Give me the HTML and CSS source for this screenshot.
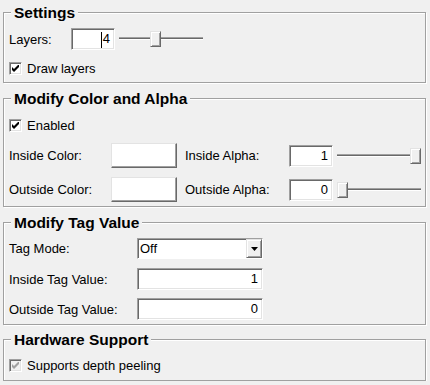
FILE: index.html
```
<!DOCTYPE html>
<html>
<head>
  <title>Depth Peeling Settings</title>
  <link rel="stylesheet" href="styles.css">
</head>
<body>

  <fieldset class="group settings">
    <legend>Settings</legend>
    <div class="row row-layers">
      <span class="lbl lbl-layers">Layers:</span>
      <div class="field field-small"><span class="caret"></span>4</div>
      <div class="slider"><span class="thumb" style="left: 31px"></span></div>
    </div>
    <label class="check check-first">
      <span class="box"><svg viewBox="0 0 7 7" width="7" height="7"><polygon points="0,2 2,4 7,-1 7,2 2,7 0,5"/></svg></span>
      Draw layers
    </label>
  </fieldset>

  <fieldset class="group color">
    <legend>Modify Color and Alpha</legend>
    <label class="check check-first">
      <span class="box"><svg viewBox="0 0 7 7" width="7" height="7"><polygon points="0,2 2,4 7,-1 7,2 2,7 0,5"/></svg></span>
      Enabled
    </label>
    <div class="row row-color">
      <span class="lbl lbl-color">Inside Color:</span>
      <div class="swatch"></div>
      <span class="lbl lbl-alpha">Inside Alpha:</span>
      <div class="field field-small">1</div>
      <div class="slider"><span class="thumb" style="left: 73px"></span></div>
    </div>
    <div class="row row-color">
      <span class="lbl lbl-color">Outside Color:</span>
      <div class="swatch"></div>
      <span class="lbl lbl-alpha">Outside Alpha:</span>
      <div class="field field-small">0</div>
      <div class="slider"><span class="thumb" style="left: 0px"></span></div>
    </div>
  </fieldset>

  <fieldset class="group tag">
    <legend>Modify Tag Value</legend>
    <div class="row row-combo">
      <span class="lbl lbl-tag">Tag Mode:</span>
      <div class="combo">
        <span class="combo-text">Off</span>
        <span class="combo-btn"><svg viewBox="0 0 7 4" width="7" height="4"><polygon points="0,0 7,0 3.5,4"/></svg></span>
      </div>
    </div>
    <div class="row row-tag">
      <span class="lbl lbl-tag">Inside Tag Value:</span>
      <div class="field field-wide">1</div>
    </div>
    <div class="row row-tag row-last">
      <span class="lbl lbl-tag">Outside Tag Value:</span>
      <div class="field field-wide">0</div>
    </div>
  </fieldset>

  <fieldset class="group hw">
    <legend>Hardware Support</legend>
    <label class="check check-hw">
      <span class="box disabled"><svg viewBox="0 0 7 7" width="7" height="7"><polygon points="0,2 2,4 7,-1 7,2 2,7 0,5"/></svg></span>
      Supports depth peeling
    </label>
  </fieldset>

</body>
</html>
```

FILE: styles.css
```
body {
  margin: 0;
  padding: 4px 4px 0 3px;
  background-color: #f0f0f0;
  font-family: "Liberation Sans", Arial, sans-serif;
  font-size: 13px;
  color: #000;
}

/* group boxes */
.group {
  margin: 0;
  padding: 0 5px;
  min-width: 0;
  border: 1px solid #a0a0a0;
  box-shadow: 1px 1px 0 #fff, inset 1px 1px 0 #fff;
}

.group + .group {
  margin-top: 7px;
}

.group.hw {
  margin-top: 6px;
}

.group legend {
  margin-left: 2px;
  padding: 0 3px;
  font-size: 15.5px;
  font-weight: bold;
  line-height: 17px;
  background-color: #f0f0f0;
}

.settings {
  padding-bottom: 5px;
}

.color {
  padding-bottom: 4px;
}

.tag {
  padding-bottom: 4px;
}

.hw {
  padding-bottom: 6px;
}

/* rows */
.row {
  display: flex;
  align-items: center;
}

.row-layers {
  margin-top: 7px;
  height: 22px;
}

.row-color {
  margin-top: 9px;
  height: 25px;
}

.row-combo {
  margin-top: 7px;
  height: 21px;
}

.row-tag {
  margin-top: 9px;
  height: 22px;
}

.row-last {
  margin-top: 8px;
}

.lbl {
  flex: none;
  white-space: nowrap;
}

.lbl-layers { width: 62px; }
.lbl-color { width: 102px; }
.lbl-alpha { width: 104px; margin-left: 8px; }
.lbl-tag { width: 128px; }

/* sunken edit fields */
.field {
  box-sizing: border-box;
  flex: none;
  height: 22px;
  padding-right: 4px;
  background-color: #fff;
  border: 1px solid;
  border-color: #a0a0a0 #fff #fff #a0a0a0;
  box-shadow: inset 1px 1px 0 #696969, inset -1px -1px 0 #e3e3e3;
  text-align: right;
  line-height: 20px;
}

.field-small { width: 44px; }
.field-wide { width: 126px; }

.caret {
  display: inline-block;
  width: 1px;
  height: 16px;
  margin-right: 1px;
  background-color: #000;
  vertical-align: middle;
}

/* trackbars */
.slider {
  position: relative;
  flex: none;
  width: 84px;
  height: 16px;
  margin-left: 4px;
}

.slider::before {
  content: "";
  position: absolute;
  left: 0;
  right: 0;
  top: 6px;
  height: 1px;
  border-top: 1px solid #a0a0a0;
  border-bottom: 1px solid #fff;
  background-color: #696969;
}

.thumb {
  position: absolute;
  top: 0;
  box-sizing: border-box;
  width: 11px;
  height: 16px;
  background-color: #f0f0f0;
  border: 1px solid;
  border-color: #e3e3e3 #696969 #696969 #e3e3e3;
  box-shadow: inset 1px 1px 0 #fff, inset -1px -1px 0 #a0a0a0;
}

/* colour buttons */
.swatch {
  box-sizing: border-box;
  flex: none;
  width: 66px;
  height: 25px;
  background-color: #fff;
  border: 1px solid;
  border-color: #e3e3e3 #696969 #696969 #e3e3e3;
  box-shadow: inset -1px -1px 0 #a0a0a0;
}

/* checkboxes */
.check {
  display: flex;
  align-items: center;
  gap: 5px;
  height: 17px;
}

.check-first {
  margin-top: 10px;
}

.check-hw {
  margin-top: 9px;
}

.box {
  box-sizing: border-box;
  display: flex;
  align-items: center;
  justify-content: center;
  width: 13px;
  height: 13px;
  background-color: #fff;
  border: 1px solid;
  border-color: #a0a0a0 #fff #fff #a0a0a0;
  box-shadow: inset 1px 1px 0 #696969, inset -1px -1px 0 #e3e3e3;
}

.box svg {
  fill: #000;
}

.box.disabled {
  background-color: #f0f0f0;
}

.box.disabled svg {
  fill: #a0a0a0;
}

/* combo box */
.combo {
  box-sizing: border-box;
  display: flex;
  width: 126px;
  height: 21px;
  background-color: #fff;
  border: 1px solid;
  border-color: #a0a0a0 #fff #fff #a0a0a0;
  box-shadow: inset 1px 1px 0 #696969;
}

.combo-text {
  flex: 1;
  padding-left: 2px;
  line-height: 19px;
}

.combo-btn {
  box-sizing: border-box;
  display: flex;
  align-items: center;
  justify-content: center;
  width: 16px;
  background-color: #f0f0f0;
  border: 1px solid;
  border-color: #e3e3e3 #696969 #696969 #e3e3e3;
  box-shadow: inset 1px 1px 0 #fff, inset -1px -1px 0 #a0a0a0;
}
```
